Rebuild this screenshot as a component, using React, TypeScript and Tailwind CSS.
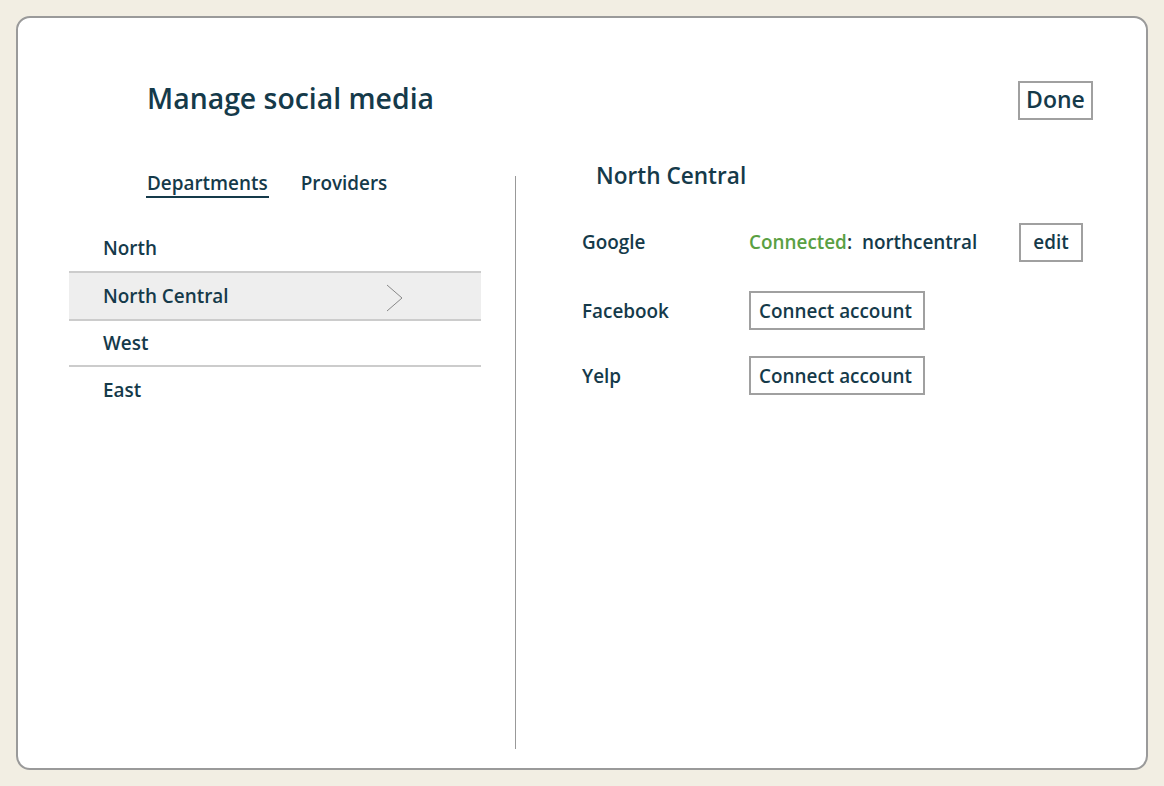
export default function App() {
  return (
    <div className="h-[786px] w-[1164px] bg-[#f2eee3] pt-4 pl-4 font-['Open_Sans',sans-serif] text-[#153a4a]">
      <div className="flex h-[754px] w-[1132px] flex-col rounded-[14px] border-2 border-[#9a9a9a] bg-white">
        <div className="flex items-start justify-between pt-[63px] pr-[53px] pl-[129px]">
          <h1 className="-mt-px mb-px text-[28.4px] leading-9 font-[550]">Manage social media</h1>
          <button className="-mb-[3px] flex h-[39px] w-[75px] items-center justify-center border-2 border-[#a0a0a0] pb-[3px] text-[23px] font-[550]">Done</button>
        </div>
        <div className="mt-[59px] flex flex-1 pb-[19px]">
          <div className="w-[498px] border-r border-[#999] pl-[51px]">
            <div className="-mt-[6px] flex gap-[32px] pl-[77px] text-[18.9px] font-[550]">
              <span className="border-b-2 border-[#153a4a] px-px leading-[26px]">Departments</span>
              <span className="leading-[26px]">Providers</span>
            </div>
            <div className="mt-[27px] w-[412px] text-[18.9px] font-[550]">
              <div className="flex h-[46px] items-center pl-[34px]">North</div>
              <div className="flex h-[50px] items-center justify-between border-y-2 border-[#cccccc] bg-[#eeeeee] pr-[77px] pl-[34px]">
                <span>North Central</span>
                <svg className="mt-1" width="18" height="28" viewBox="0 0 18 28" fill="none" stroke="#888" strokeWidth="1"><path d="M1 1l15 13L1 27" /></svg>
              </div>
              <div className="flex h-[46px] items-center border-b-2 border-[#cccccc] pl-[34px]">West</div>
              <div className="flex h-[47px] items-center pl-[34px]">East</div>
            </div>
          </div>
          <div className="flex-1 pl-[66px] text-[18.9px] font-[550]">
            <div className="-mt-[16px] pl-[14px] text-[22.6px] leading-8">North Central</div>
            <div className="mt-[31px] flex h-[39px] items-center">
              <span className="w-[167px]">Google</span>
              <span className="text-[#5aa043]">Connected</span>
              <span>:&nbsp;&nbsp;northcentral</span>
              <button className="mr-[63px] ml-auto flex h-[39px] w-[64px] items-center justify-center border-2 border-[#a0a0a0]">edit</button>
            </div>
            <div className="mt-[29px] flex h-[39px] items-center">
              <span className="w-[167px] pt-px">Facebook</span>
              <button className="flex h-[39px] w-[176px] items-center border-2 border-[#a0a0a0] pt-px pl-2">Connect account</button>
            </div>
            <div className="mt-[26px] flex h-[39px] items-center">
              <span className="w-[167px] pt-[2px]">Yelp</span>
              <button className="flex h-[39px] w-[176px] items-center border-2 border-[#a0a0a0] pt-[2px] pl-2">Connect account</button>
            </div>
          </div>
        </div>
      </div>
    </div>
  );
}
